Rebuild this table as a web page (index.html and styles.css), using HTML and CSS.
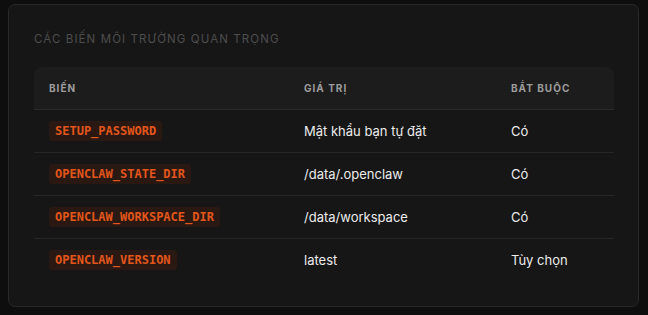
FILE: index.html
```html
<!DOCTYPE html>
<html lang="vi">
<head>
<meta charset="utf-8">
<link rel="stylesheet" href="styles.css">
</head>
<body>
<section class="card">
  <h2 class="title">Các biến môi trường quan trọng</h2>
  <div class="table">
    <div class="row head">
      <div class="cell">Biến</div>
      <div class="cell">Giá trị</div>
      <div class="cell">Bắt buộc</div>
    </div>
    <div class="row">
      <div class="cell"><code class="code">SETUP_PASSWORD</code></div>
      <div class="cell">Mật khẩu bạn tự đặt</div>
      <div class="cell">Có</div>
    </div>
    <div class="row">
      <div class="cell"><code class="code">OPENCLAW_STATE_DIR</code></div>
      <div class="cell">/data/.openclaw</div>
      <div class="cell">Có</div>
    </div>
    <div class="row">
      <div class="cell"><code class="code">OPENCLAW_WORKSPACE_DIR</code></div>
      <div class="cell">/data/workspace</div>
      <div class="cell">Có</div>
    </div>
    <div class="row last">
      <div class="cell"><code class="code">OPENCLAW_VERSION</code></div>
      <div class="cell">latest</div>
      <div class="cell">Tùy chọn</div>
    </div>
  </div>
</section>
</body>
</html>
```

FILE: styles.css
```css
html, body {
  margin: 0;
  background: #0e0e0e;
}
body {
  padding: 4px 9px 8px 8px;
  font-family: Inter, "Noto Sans", sans-serif;
}
.card {
  background: #161616;
  border: 1px solid #282828;
  border-radius: 7px;
  padding: 26px 24px 25px 24px;
}
.title {
  margin: 0 0 20px 1px;
  font-size: 11.5px;
  font-weight: 400;
  line-height: 16px;
  letter-spacing: 1.1px;
  text-transform: uppercase;
  color: #4d4d4d;
}
.table {
  display: flex;
  flex-direction: column;
  margin-left: 1px;
}
.row {
  display: grid;
  grid-template-columns: 255px 207px 1fr;
  align-items: center;
  height: 42px;
  border-bottom: 1px solid #262626;
  font-size: 13px;
  color: #ececec;
}
.row.last {
  border-bottom: none;
}
.row.head {
  background: #1c1c1c;
  border-radius: 8px 8px 0 0;
  border-bottom: 1px solid #2a2a2a;
  font-size: 10px;
  font-weight: 700;
  letter-spacing: 1px;
  text-transform: uppercase;
  color: #9d9d9d;
}
.cell {
  padding: 0 15px;
}
.code {
  display: inline-block;
  font-family: "DejaVu Sans Mono", "Liberation Mono", monospace;
  font-size: 12px;
  font-weight: 700;
  line-height: 20px;
  padding: 0 6px;
  border-radius: 3px;
  background: #2a1912;
  color: #e2561c;
}
```
